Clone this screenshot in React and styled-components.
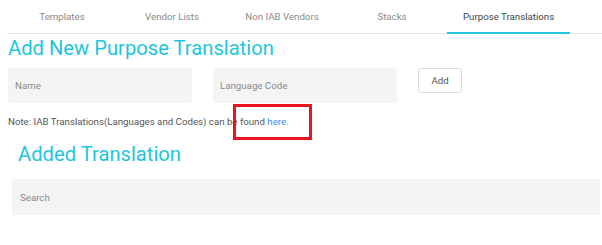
import styled, { createGlobalStyle } from 'styled-components';

const GlobalStyle = createGlobalStyle`
  html, body {
    margin: 0;
    padding: 0;
    background: #ffffff;
    font-family: 'Roboto', 'Liberation Sans', sans-serif;
  }
`;

const Page = styled.div`
  width: 602px;
  height: 245px;
  position: relative;
  overflow: hidden;
  box-sizing: border-box;
  padding-left: 7px;
`;

const TabBar = styled.div`
  display: flex;
  height: 33px;
  border-bottom: 1px solid #e6e6e6;
`;

const Tab = styled.div`
  min-width: 110px;
  box-sizing: border-box;
  padding: 0 16px;
  display: flex;
  align-items: center;
  justify-content: center;
  font-size: 9.7px;
  color: ${(p) => (p.$active ? '#444' : '#8a8a8a')};
  border-bottom: 2px solid ${(p) => (p.$active ? '#1ec6dc' : 'transparent')};
  margin-bottom: -1px;
  white-space: nowrap;
`;

const Heading = styled.h2`
  margin: 1px 0 0 1px;
  font-size: 20.2px;
  font-weight: 400;
  line-height: 26px;
  color: #1ec6dc;
`;

const FormRow = styled.div`
  display: flex;
  align-items: flex-start;
  gap: 21px;
  margin-top: 7px;
  padding-left: 1px;
`;

const Field = styled.div`
  width: 184px;
  height: 35px;
  box-sizing: border-box;
  background: #f4f4f4;
  border-radius: 2px;
  display: flex;
  align-items: center;
  padding-left: 7px;
  font-size: 9.7px;
  color: #8a8a8a;
`;

const AddButton = styled.button`
  width: 44px;
  height: 25px;
  background: #fff;
  border: 1px solid #dcdcdc;
  border-radius: 3px;
  font-family: inherit;
  font-size: 9.7px;
  color: #555;
  padding: 0;
`;

const Note = styled.p`
  margin: 13px 0 0 1px;
  font-size: 9.7px;
  line-height: 12px;
  color: #555;
`;

const Link = styled.a`
  color: #2f8fe8;
  text-decoration: none;
`;

const Section = styled.div`
  padding-left: 5px;
  margin-top: 13px;
`;

const SubHeading = styled(Heading)`
  margin: 0 0 0 6px;
`;

const Search = styled.div`
  width: 588px;
  height: 36px;
  box-sizing: border-box;
  background: #f4f4f4;
  margin-top: 12px;
  display: flex;
  align-items: center;
  padding-left: 8px;
  font-size: 9.7px;
  color: #8a8a8a;
`;

const Highlight = styled.div`
  position: absolute;
  left: 233px;
  top: 104px;
  width: 79px;
  height: 36px;
  box-sizing: border-box;
  border: 3px solid #e8141f;
`;

const tabs = ['Templates', 'Vendor Lists', 'Non IAB Vendors', 'Stacks', 'Purpose Translations'];

export default function App() {
  return (
    <Page>
      <GlobalStyle />
      <TabBar>
        {tabs.map((t) => (
          <Tab key={t} $active={t === 'Purpose Translations'}>{t}</Tab>
        ))}
      </TabBar>
      <Heading>Add New Purpose Translation</Heading>
      <FormRow>
        <Field>Name</Field>
        <Field>Language Code</Field>
        <AddButton>Add</AddButton>
      </FormRow>
      <Note>
        Note: IAB Translations(Languages and Codes) can be found <Link href="#">here.</Link>
      </Note>
      <Section>
        <SubHeading>Added Translation</SubHeading>
        <Search>Search</Search>
      </Section>
      <Highlight />
    </Page>
  );
}
